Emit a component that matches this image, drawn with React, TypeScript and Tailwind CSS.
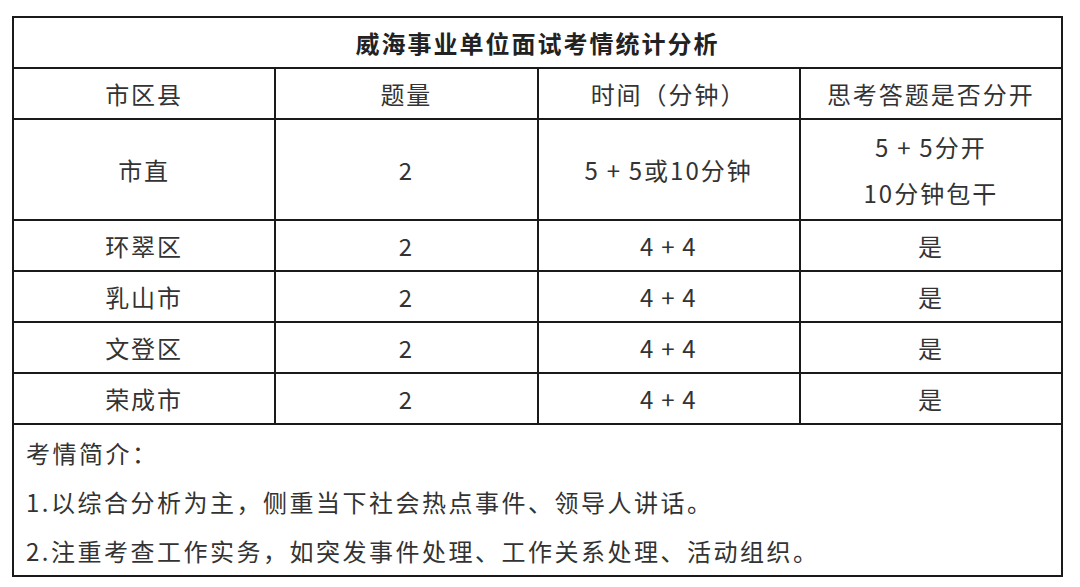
const rows = [
  { area: "环翠区", count: "2", time: "4+4", split: "是" },
  { area: "乳山市", count: "2", time: "4+4", split: "是" },
  { area: "文登区", count: "2", time: "4+4", split: "是" },
  { area: "荣成市", count: "2", time: "4+4", split: "是" },
];

const cell = "border-2 border-[#1a1a1a] text-center align-middle";
const plus = (s: string) => s.replace("+", "\u2009+\u2009");

export default function App() {
  return (
    <div
      className="w-[1080px] h-[587px] bg-white pt-[16px] pl-[12px] text-[#333] text-[24px] tracking-[2px]"
      style={{ fontFamily: '"Microsoft YaHei", "Noto Sans CJK SC", "Noto Sans", sans-serif' }}
    >
      <table className="w-[1051px] table-fixed border-collapse border-2 border-[#1a1a1a]">
        <tbody>
          <tr className="h-[51px]">
            <td colSpan={4} className={`${cell} font-bold text-[#222]`}>
              威海事业单位面试考情统计分析
            </td>
          </tr>
          <tr className="h-[51px]">
            <td className={cell}>市区县</td>
            <td className={cell}>题量</td>
            <td className={cell}>时间（分钟）</td>
            <td className={cell}>思考答题是否分开</td>
          </tr>
          <tr className="h-[101px]">
            <td className={cell}>市直</td>
            <td className={cell}>2</td>
            <td className={cell}>{plus("5+5或10分钟")}</td>
            <td className={`${cell} leading-[46px]`}>
              <div>{plus("5+5分开")}</div>
              <div>10分钟包干</div>
            </td>
          </tr>
          {rows.map((r) => (
            <tr key={r.area} className="h-[51px]">
              <td className={cell}>{r.area}</td>
              <td className={cell}>{r.count}</td>
              <td className={`${cell} tracking-[1.5px]`}>{plus(r.time)}</td>
              <td className={cell}>{r.split}</td>
            </tr>
          ))}
          <tr className="h-[150px]">
            <td colSpan={4} className="border-2 border-[#1a1a1a] px-[12px] pt-[3px] align-top text-left leading-[49px] tracking-[2.5px]">
              <div>考情简介：</div>
              <div>1.以综合分析为主，侧重当下社会热点事件、领导人讲话。</div>
              <div>2.注重考查工作实务，如突发事件处理、工作关系处理、活动组织。</div>
            </td>
          </tr>
        </tbody>
      </table>
    </div>
  );
}
